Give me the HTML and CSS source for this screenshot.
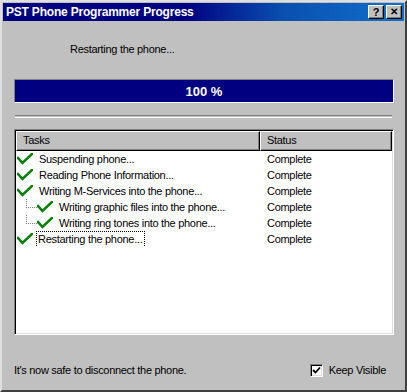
FILE: index.html
```html
<!DOCTYPE html>
<html>
<head>
<meta charset="utf-8">
<link rel="stylesheet" href="styles.css">
</head>
<body>
<div class="window">
  <div class="titlebar">
    <span class="title">PST Phone Programmer Progress</span>
    <div class="tbtns">
      <span class="tbtn">?</span>
      <span class="tbtn x">&#x2715;</span>
    </div>
  </div>
  <div class="content">
    <div class="status-label">Restarting the phone...</div>
    <div class="progress"><span>100 %</span></div>
    <div class="separator"></div>
    <div class="listview">
      <div class="header">
        <div class="hcell tasks">Tasks</div>
        <div class="hcell status">Status</div>
        <div class="hfill"></div>
      </div>
      <div class="rows">
        <div class="row"><div class="task"><svg class="chk" viewBox="0 0 16 12"><path d="M1 5 L5.5 10 L15 1"/></svg><span>Suspending phone...</span></div><div class="st">Complete</div></div>
        <div class="row"><div class="task"><svg class="chk" viewBox="0 0 16 12"><path d="M1 5 L5.5 10 L15 1"/></svg><span>Reading Phone Information...</span></div><div class="st">Complete</div></div>
        <div class="row"><div class="task"><svg class="chk" viewBox="0 0 16 12"><path d="M1 5 L5.5 10 L15 1"/></svg><span>Writing M-Services into the phone...</span></div><div class="st">Complete</div></div>
        <div class="row"><div class="task sub first"><span class="tree"></span><svg class="chk" viewBox="0 0 16 12"><path d="M1 5 L5.5 10 L15 1"/></svg><span>Writing graphic files into the phone...</span></div><div class="st">Complete</div></div>
        <div class="row"><div class="task sub last"><span class="tree"></span><svg class="chk" viewBox="0 0 16 12"><path d="M1 5 L5.5 10 L15 1"/></svg><span>Writing ring tones into the phone...</span></div><div class="st">Complete</div></div>
        <div class="row"><div class="task"><svg class="chk" viewBox="0 0 16 12"><path d="M1 5 L5.5 10 L15 1"/></svg><span class="focus">Restarting the phone...</span></div><div class="st">Complete</div></div>
      </div>
    </div>
    <div class="footer">
      <span class="safe">It's now safe to disconnect the phone.</span>
      <label class="keep"><span class="cbox"><svg viewBox="0 0 9 9"><path d="M1 4 L3.5 6.5 L8 1.5"/></svg></span><span>Keep Visible</span></label>
    </div>
  </div>
</div>
</body>
</html>
```

FILE: styles.css
```css
html, body { margin: 0; padding: 0; }
body {
  width: 407px; height: 392px; overflow: hidden;
  font-family: "Liberation Sans", Arial, sans-serif;
  font-size: 11px; color: #000;
  background: #c0c0c0;
}
.window {
  box-sizing: border-box;
  width: 407px; height: 392px;
  background: #c0c0c0;
  border-style: solid;
  border-width: 2px 2px 2px 2px;
  border-color: #dfdfdf #404040 #404040 #dfdfdf;
  padding: 1px 1px 0 1px;
  display: flex; flex-direction: column;
}
.titlebar {
  height: 18px;
  background: linear-gradient(to right, #000080 0%, #000080 45%, #0a50b0 70%, #1070cc 100%);
  display: flex; align-items: center; justify-content: space-between;
  padding: 0 2px 0 3px;
}
.title {
  color: #fff; font-weight: bold;
  font-family: "Liberation Sans Narrow", "Liberation Sans", Arial, sans-serif;
  font-size: 12px; letter-spacing: -0.2px;
}
.tbtns { display: flex; gap: 2px; }
.tbtn {
  box-sizing: border-box;
  width: 16px; height: 14px;
  background: #c0c0c0;
  border-style: solid; border-width: 1px;
  border-color: #fff #000 #000 #fff;
  box-shadow: inset -1px -1px 0 #808080;
  font-weight: bold; font-size: 11px; line-height: 12px; text-align: center; color: #000;
}
.tbtn.x { font-size: 10px; }
.content {
  flex: 1;
  padding: 0 10px 0 11px;
  display: flex; flex-direction: column;
}
.status-label {
  margin: 21px 0 0 56px;
  height: 14px; line-height: 14px;
  letter-spacing: -0.3px;
}
.progress {
  margin-top: 23px;
  height: 24px; box-sizing: border-box;
  background: #000080;
  border-style: solid; border-width: 1px;
  border-color: #808080 #fff #fff #808080;
  color: #fff; font-weight: bold; font-size: 13px;
  display: flex; align-items: center; justify-content: center;
}
.separator {
  margin: 12px 2px 0 1px;
  height: 1px;
  border-top: 1px solid #808080;
  border-bottom: 1px solid #fff;
}
.listview {
  margin-top: 11px;
  height: 206px; box-sizing: border-box;
  background: #fff;
  border-style: solid; border-width: 1px;
  border-color: #808080 #fff #fff #808080;
  box-shadow: inset 1px 1px 0 #000, inset -1px -1px 0 #dfdfdf;
  padding: 1px;
  display: flex; flex-direction: column;
}
.header { display: flex; height: 20px; }
.hcell {
  box-sizing: border-box;
  height: 20px; line-height: 17px;
  background: #c0c0c0;
  border-style: solid; border-width: 1px;
  border-color: #fff #000 #000 #fff;
  box-shadow: inset -1px -1px 0 #808080;
  padding-left: 6px;
  letter-spacing: -0.3px;
}
.hcell.tasks { width: 244px; }
.hcell.status { width: 132px; }
.hfill { flex: 1; }
.row { display: flex; height: 16px; align-items: center; }
.task {
  box-sizing: border-box;
  width: 244px; display: flex; align-items: center;
  padding-left: 1px; letter-spacing: -0.3px; white-space: nowrap; overflow: hidden;
  position: relative; height: 16px;
}
.task.sub { padding-left: 21px; }
.chk { width: 16px; height: 12px; margin-right: 6px; flex: none; }
.chk path { fill: none; stroke: #008000; stroke-width: 2.6; stroke-linecap: square; }
.st { padding-left: 7px; letter-spacing: -0.3px; }
.tree {
  position: absolute; left: 10px; width: 10px;
  border-left: 1px dotted #808080; border-bottom: 1px dotted #808080;
}
.task.first .tree { top: -8px; height: 16px; }
.task.last .tree { top: -8px; height: 16px; }
.focus {
  outline: 1px dotted #000; outline-offset: 0;
  padding: 0 2px 1px 1px; margin-left: -2px; line-height: 14px;
}
.footer {
  margin-top: 28px;
  display: flex; align-items: center; justify-content: space-between;
  height: 14px;
  padding-right: 8px;
}
.safe { letter-spacing: -0.3px; }
.keep { display: flex; align-items: center; gap: 6px; letter-spacing: -0.3px; }
.cbox {
  box-sizing: border-box; width: 13px; height: 13px;
  background: #fff;
  border-style: solid; border-width: 1px;
  border-color: #808080 #fff #fff #808080;
  box-shadow: inset 1px 1px 0 #000, inset -1px -1px 0 #dfdfdf;
  display: flex; align-items: center; justify-content: center;
}
.cbox svg { width: 9px; height: 9px; }
.cbox path { fill: none; stroke: #000; stroke-width: 1.8; }
```
